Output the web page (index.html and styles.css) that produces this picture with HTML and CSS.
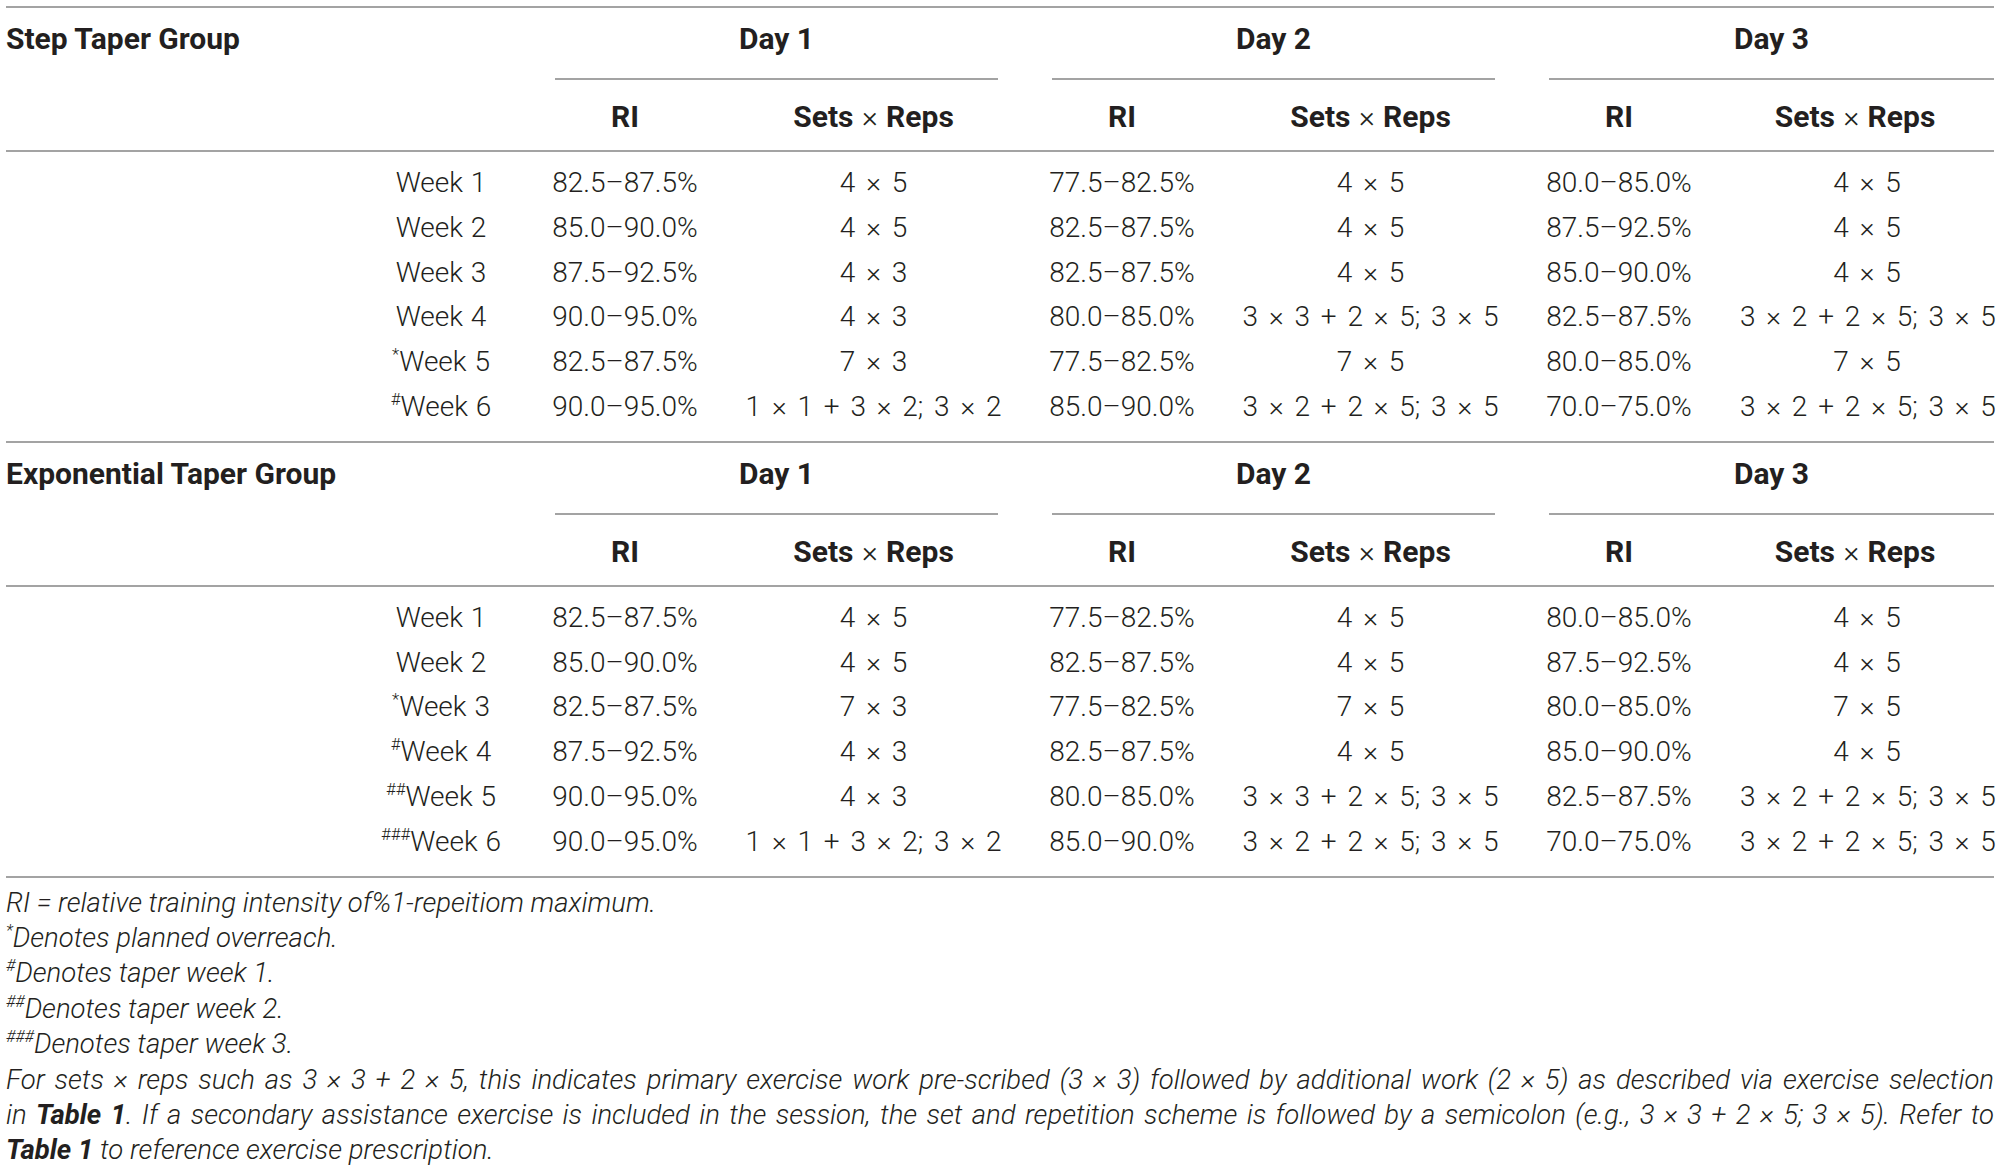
FILE: index.html
```html
<!DOCTYPE html>
<html>
<head>
<meta charset="utf-8">
<link rel="stylesheet" href="styles.css">
</head>
<body>
<div class="page">
  <section class="sec">
    <div class="row head">
      <div class="lab">Step Taper Group</div>
      <div class="day"><span>Day 1</span></div>
      <div class="day"><span>Day 2</span></div>
      <div class="day last"><span>Day 3</span></div>
    </div>
    <div class="row sub">
      <div class="c blank"></div>
      <div class="c">RI</div><div class="c">Sets <span class="x">×</span> Reps</div>
      <div class="c">RI</div><div class="c">Sets <span class="x">×</span> Reps</div>
      <div class="c">RI</div><div class="c end">Sets <span class="x">×</span> Reps</div>
    </div>
    <div class="rows">
      <div class="row data"><div></div><div class="wk">Week 1</div><div>82.5–87.5%</div><div>4 × 5</div><div>77.5–82.5%</div><div>4 × 5</div><div>80.0–85.0%</div><div class="end">4 × 5</div></div>
      <div class="row data"><div></div><div class="wk">Week 2</div><div>85.0–90.0%</div><div>4 × 5</div><div>82.5–87.5%</div><div>4 × 5</div><div>87.5–92.5%</div><div class="end">4 × 5</div></div>
      <div class="row data"><div></div><div class="wk">Week 3</div><div>87.5–92.5%</div><div>4 × 3</div><div>82.5–87.5%</div><div>4 × 5</div><div>85.0–90.0%</div><div class="end">4 × 5</div></div>
      <div class="row data"><div></div><div class="wk">Week 4</div><div>90.0–95.0%</div><div>4 × 3</div><div>80.0–85.0%</div><div>3 × 3 + 2 × 5; 3 × 5</div><div>82.5–87.5%</div><div class="end">3 × 2 + 2 × 5; 3 × 5</div></div>
      <div class="row data"><div></div><div class="wk"><sup>*</sup>Week 5</div><div>82.5–87.5%</div><div>7 × 3</div><div>77.5–82.5%</div><div>7 × 5</div><div>80.0–85.0%</div><div class="end">7 × 5</div></div>
      <div class="row data"><div></div><div class="wk"><sup>#</sup>Week 6</div><div>90.0–95.0%</div><div>1 × 1 + 3 × 2; 3 × 2</div><div>85.0–90.0%</div><div>3 × 2 + 2 × 5; 3 × 5</div><div>70.0–75.0%</div><div class="end">3 × 2 + 2 × 5; 3 × 5</div></div>
    </div>
  </section>
  <section class="sec closing">
    <div class="row head">
      <div class="lab">Exponential Taper Group</div>
      <div class="day"><span>Day 1</span></div>
      <div class="day"><span>Day 2</span></div>
      <div class="day last"><span>Day 3</span></div>
    </div>
    <div class="row sub">
      <div class="c blank"></div>
      <div class="c">RI</div><div class="c">Sets <span class="x">×</span> Reps</div>
      <div class="c">RI</div><div class="c">Sets <span class="x">×</span> Reps</div>
      <div class="c">RI</div><div class="c end">Sets <span class="x">×</span> Reps</div>
    </div>
    <div class="rows">
      <div class="row data"><div></div><div class="wk">Week 1</div><div>82.5–87.5%</div><div>4 × 5</div><div>77.5–82.5%</div><div>4 × 5</div><div>80.0–85.0%</div><div class="end">4 × 5</div></div>
      <div class="row data"><div></div><div class="wk">Week 2</div><div>85.0–90.0%</div><div>4 × 5</div><div>82.5–87.5%</div><div>4 × 5</div><div>87.5–92.5%</div><div class="end">4 × 5</div></div>
      <div class="row data"><div></div><div class="wk"><sup>*</sup>Week 3</div><div>82.5–87.5%</div><div>7 × 3</div><div>77.5–82.5%</div><div>7 × 5</div><div>80.0–85.0%</div><div class="end">7 × 5</div></div>
      <div class="row data"><div></div><div class="wk"><sup>#</sup>Week 4</div><div>87.5–92.5%</div><div>4 × 3</div><div>82.5–87.5%</div><div>4 × 5</div><div>85.0–90.0%</div><div class="end">4 × 5</div></div>
      <div class="row data"><div></div><div class="wk"><sup>##</sup>Week 5</div><div>90.0–95.0%</div><div>4 × 3</div><div>80.0–85.0%</div><div>3 × 3 + 2 × 5; 3 × 5</div><div>82.5–87.5%</div><div class="end">3 × 2 + 2 × 5; 3 × 5</div></div>
      <div class="row data"><div></div><div class="wk"><sup>###</sup>Week 6</div><div>90.0–95.0%</div><div>1 × 1 + 3 × 2; 3 × 2</div><div>85.0–90.0%</div><div>3 × 2 + 2 × 5; 3 × 5</div><div>70.0–75.0%</div><div class="end">3 × 2 + 2 × 5; 3 × 5</div></div>
    </div>
  </section>
  <div class="notes">
    <p>RI = relative training intensity of%1-repeitiom maximum.</p>
    <p><sup>*</sup>Denotes planned overreach.</p>
    <p><sup>#</sup>Denotes taper week 1.</p>
    <p><sup>##</sup>Denotes taper week 2.</p>
    <p><sup>###</sup>Denotes taper week 3.</p>
    <p class="just">For sets × reps such as 3 × 3 + 2 × 5, this indicates primary exercise work pre-scribed (3 × 3) followed by additional work (2 × 5) as described via exercise selection</p>
    <p class="just">in <b>Table 1</b>. If a secondary assistance exercise is included in the session, the set and repetition scheme is followed by a semicolon (e.g., 3 × 3 + 2 × 5; 3 × 5). Refer to</p>
    <p><b>Table 1</b> to reference exercise prescription.</p>
  </div>
</div>
</body>
</html>
```

FILE: styles.css
```css
body {
  margin: 0;
  background: #ffffff;
  color: #231f20;
  font-family: Roboto, "Liberation Sans", sans-serif;
}

.page {
  width: 1988px;
  padding: 6px 6px 0 6px;
}

.sec {
  border-top: 2px solid #a3a3a3;
}

.sec.closing {
  border-bottom: 2px solid #a3a3a3;
}

.row {
  display: grid;
  grid-template-columns: 348px 174px 194px 303px 194px 303px 194px 278px;
  font-size: 28px;
}

.head {
  padding-top: 13px;
  font-weight: 700;
  font-size: 30px;
  line-height: 36px;
}

.lab {
  grid-column: span 2;
}

.day {
  grid-column: span 2;
  padding: 0 27px;
  text-align: center;
}

.day.last {
  padding-right: 0;
}

.day span {
  display: block;
  padding-bottom: 21px;
  border-bottom: 2px solid #a3a3a3;
}

.sub .c {
  padding: 19px 0 15px;
  font-size: 30px;
  line-height: 36px;
  font-weight: 700;
  text-align: center;
  border-bottom: 2px solid #a3a3a3;
}

.sub .blank {
  grid-column: span 2;
}

.x {
  font-weight: 300;
  margin: 0 1px;
}

.end {
  padding-left: 24px;
}

.rows {
  padding: 9px 0 11px;
}

.data {
  height: 44.8px;
  line-height: 44.8px;
  font-weight: 300;
  text-align: center;
  white-space: nowrap;
  word-spacing: 4px;
}

.data .wk {
  word-spacing: 1px;
}

sup {
  font-size: 60%;
  line-height: 0;
  vertical-align: 0.65em;
}

.notes {
  padding-top: 7px;
  font-size: 27.5px;
  line-height: 35.4px;
  font-style: italic;
  font-weight: 300;
}

.notes p {
  margin: 0;
}

.notes .just {
  text-align: justify;
  text-align-last: justify;
}

.notes b {
  font-weight: 700;
}
```
